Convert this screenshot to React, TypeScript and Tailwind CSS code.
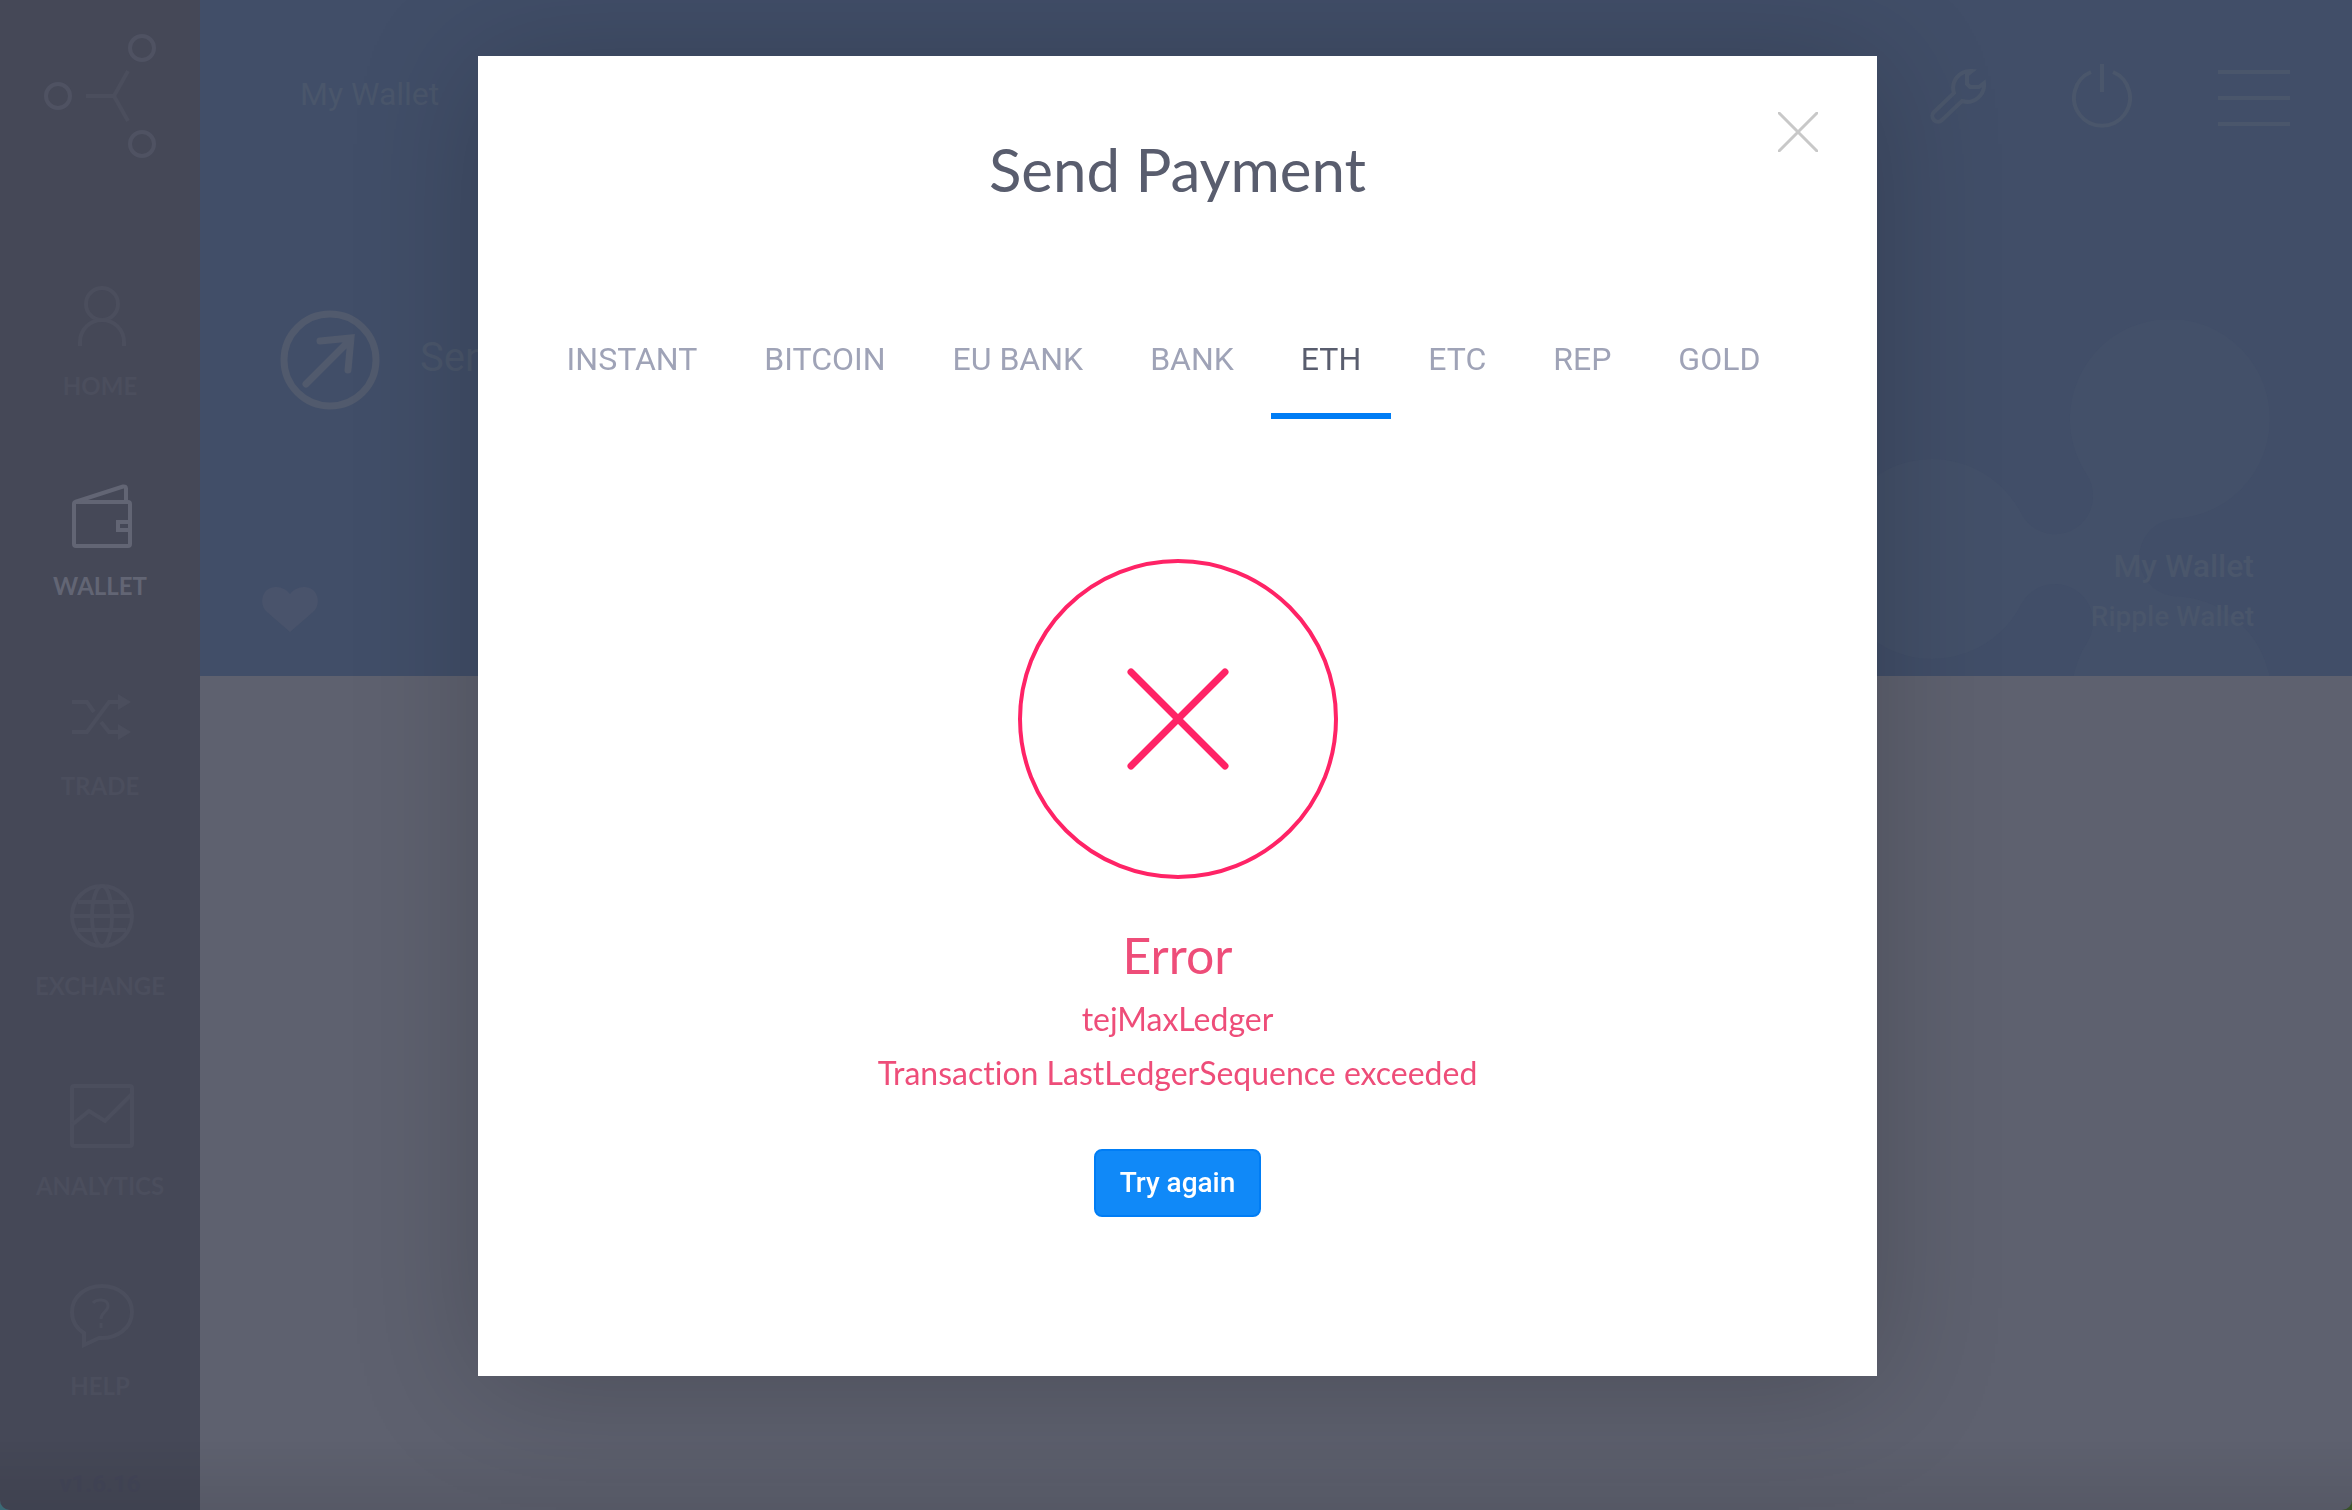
import React, { useState } from 'react';

const navItems = [
  { id: 'home', label: 'HOME' },
  { id: 'wallet', label: 'WALLET' },
  { id: 'trade', label: 'TRADE' },
  { id: 'exchange', label: 'EXCHANGE' },
  { id: 'analytics', label: 'ANALYTICS' },
  { id: 'help', label: 'HELP' },
];

const tabs = ['INSTANT', 'BITCOIN', 'EU BANK', 'BANK', 'ETH', 'ETC', 'REP', 'GOLD'];

function Logo() {
  return (
    <svg width="112" height="124" viewBox="0 0 112 124" fill="none" stroke="currentColor" strokeWidth="4">
      <circle cx="98" cy="14" r="12" />
      <circle cx="14" cy="62" r="12" />
      <circle cx="98" cy="110" r="12" />
      <path d="M42 62h28M84 37L70 62l14 25" className="text-[#4b4e5d]" stroke="currentColor" />
    </svg>
  );
}

function NavIcon({ id }: { id: string }) {
  return (
    <svg className="ml-1" width="64" height="64" viewBox="0 0 64 64" fill="none" stroke="currentColor" strokeWidth="4">
      {id === 'home' && (
        <>
          <circle cx="32" cy="20" r="16" />
          <path d="M10 62v-4a22 22 0 0 1 44 0v4" />
        </>
      )}
      {id === 'wallet' && (
        <>
          <rect x="4" y="18" width="56" height="44" rx="2" />
          <path d="M5 18L53 2.500q3-.5 3 2V18M62 38H48v8h14" />
        </>
      )}
      {id === 'trade' && (
        <>
          <path d="M2 18h15l7 10M2 48h15l22-30h12M31 38l8 10h12" />
          <path d="M48 10l13 8-13 8zM48 40l13 8-13 8z" fill="currentColor" stroke="none" />
        </>
      )}
      {id === 'exchange' && (
        <>
          <circle cx="32" cy="32" r="30" />
          <ellipse cx="32" cy="32" rx="10" ry="30" />
          <path d="M8 18h48M2 32h60M8 46h48" />
        </>
      )}
      {id === 'analytics' && (
        <>
          <rect x="2" y="2" width="60" height="60" rx="2" />
          <path d="M3 40l16-13 16 10 27-27" />
        </>
      )}
      {id === 'help' && (
        <>
          <path d="M32 2C15 2 2 13 2 28c0 9 4 16 12 21v12l15-7c18 1 33-10 33-26C62 13 49 2 32 2z" />
          <path d="M23 19c3-4 15-5 15 3 0 6-7 6-7 13M31 39v5" strokeWidth="3" />
        </>
      )}
    </svg>
  );
}

function Sidebar() {
  return (
    <aside className="flex w-[200px] shrink-0 flex-col items-center bg-[#454857] text-[#4b4e5d]">
      <a href="#" aria-label="Dashboard" className="mt-[34px] text-[#4f5262]">
        <Logo />
      </a>
      <nav className="mt-[126px] flex flex-col gap-20">
        {navItems.map((item) => (
          <a
            key={item.id}
            href={`#${item.id}`}
            className={`flex flex-col items-center ${item.id === 'wallet' ? 'text-[#626574]' : ''}`}
          >
            <NavIcon id={item.id} />
            <span className="mt-5 text-[24px] leading-9 font-bold">{item.label}</span>
          </a>
        ))}
      </nav>
      <p className="mt-[62px] font-[Roboto] text-[24px] leading-9 font-bold text-[#434658]">v1.6.16</p>
    </aside>
  );
}

function Header() {
  return (
    <header className="relative flex h-[676px] flex-col overflow-hidden bg-[#414e68] font-[Roboto] text-[#4a566b]">
      {/* ripple watermark */}
      <svg className="absolute right-[80px] bottom-0 text-[#435069]" width="438" height="356" viewBox="0 0 438 356" fill="currentColor">
        <path d="M188 195A38 38 0 0 0 259 175A38 38 0 0 0 253 155A100 100 0 1 1 338 199A39 39 0 0 0 338 276A100 100 0 1 1 254 321A38 38 0 0 0 188 283A100 100 0 1 1 188 195Z" />
      </svg>

      <div className="relative flex h-[192px] items-center pr-[62px] pl-[100px]">
        <h1 className="pb-1 text-[32px]">My Wallet</h1>
        <div className="ml-auto flex items-center gap-[86px]">
          <button type="button" aria-label="Settings">
            <svg width="56" height="56" viewBox="0 0 56 56" fill="none" stroke="currentColor" strokeWidth="4">
              <path d="M42 3A17 17 0 0 0 24 25L4 44a5 5 0 0 0 8 8L32 33A17 17 0 0 0 54 15L49 19H40L37 16V7Z" />
            </svg>
          </button>
          <button type="button" aria-label="Log out">
            <svg width="60" height="64" viewBox="0 0 60 64" fill="none" stroke="currentColor" strokeWidth="4">
              <path d="M19 8a28 28 0 1 0 22 0M30 0v28" />
            </svg>
          </button>
          <button type="button" aria-label="Menu">
            <svg width="72" height="60" viewBox="0 0 72 60" fill="none" stroke="currentColor" strokeWidth="4">
              <path d="M0 6h72M0 32h72M0 58h72" />
            </svg>
          </button>
        </div>
      </div>

      <button type="button" className="relative mt-[118px] ml-20 flex items-center gap-10 self-start">
        <svg className="text-[#515a6d]" width="100" height="100" viewBox="0 0 100 100" fill="none" stroke="currentColor" strokeWidth="7">
          <circle cx="50" cy="50" r="46" />
          <path d="M26 74L70 30M40 31L71 28L68 60" strokeLinecap="round" />
        </svg>
        <span className="pb-1 text-[40px]">Send</span>
      </button>

      <div className="relative flex flex-1 items-end justify-between pr-[98px] pb-[34px] pl-[62px]">
        <svg className="mb-[10px] text-[#49536b]" width="56" height="45" viewBox="0 0 56 45" fill="currentColor">
          <path d="M28 7C21-2 8-2 3 5c-5 7-3 16 2 20l23 20 23-20c5-4 7-13 2-20-5-7-18-7-25 2z" />
        </svg>
        <div className="text-right font-medium">
          <p className="text-[32px] leading-[52px]">My Wallet</p>
          <p className="text-[28px] leading-[50px]">Ripple Wallet</p>
        </div>
      </div>
    </header>
  );
}

function PaymentModal() {
  const [activeTab, setActiveTab] = useState('ETH');

  return (
    <div className="fixed inset-0 flex items-start justify-center overflow-hidden pt-14 pl-[3px] font-[Lato] [font-variant-ligatures:none]">
      <div
        role="dialog"
        aria-labelledby="modal-title"
        className="relative flex min-h-[1320px] w-full max-w-[1399px] flex-col items-center bg-white shadow-[0_10px_120px_rgba(0,0,0,0.2)]"
      >
        <button type="button" aria-label="Close" className="absolute top-14 right-[59px] text-[#c8c8c8]">
          <svg width="40" height="40" viewBox="0 0 40 40" fill="none" stroke="currentColor" strokeWidth="3">
            <path d="M0 0l40 40M40 0L0 40" />
          </svg>
        </button>

        <h2 id="modal-title" className="mt-[77px] text-[60px] leading-[72px] text-[#595d6e]">
          Send Payment
        </h2>

        <div role="tablist" className="mt-[98px] mr-7 flex gap-[7px] font-[Roboto]">
          {tabs.map((tab) => (
            <button
              key={tab}
              type="button"
              role="tab"
              aria-selected={tab === activeTab}
              onClick={() => setActiveTab(tab)}
              className={`border-b-[6px] px-[30px] pt-8 pb-[30px] text-[32px] leading-[48px] ${
                tab === activeTab ? 'border-[#007df5] text-[#595d6e]' : 'border-transparent text-[#9fa3b7]'
              }`}
            >
              {tab}
            </button>
          ))}
        </div>

        <svg className="mt-[140px]" width="320" height="320" viewBox="0 0 320 320" fill="none" stroke="#ff2366">
          <circle cx="160" cy="160" r="158" strokeWidth="4" />
          <path d="M113 113l94 94M207 113l-94 94" strokeWidth="7" strokeLinecap="round" />
        </svg>

        <div className="mt-[46px] flex flex-col items-center text-[#ee4d79]">
          <h3 className="mb-[7px] text-[50px] leading-[60px]">Error</h3>
          <p className="text-[32px] leading-[54px]">tejMaxLedger</p>
          <p className="text-[32px] leading-[54px]">Transaction LastLedgerSequence exceeded</p>
        </div>

        <button
          type="button"
          className="mt-[49px] h-[68px] rounded-lg border-2 border-[#007df5] bg-[#1089f8] px-6 font-[Roboto] text-[28px] font-medium text-white"
        >
          Try again
        </button>
      </div>
    </div>
  );
}

export default function App() {
  return (
    <div className="bg-linear-to-r from-[#3f7480] to-[#3d5a2c]">
      <div className="flex min-h-screen overflow-hidden rounded-b-[10px] bg-[#5e616f] font-[Lato]">
        <Sidebar />
        <main className="min-w-0 flex-1">
          <Header />
        </main>
      </div>
      <PaymentModal />
      <div className="pointer-events-none fixed inset-x-0 bottom-0 h-[70px] bg-linear-to-t from-black/8 to-transparent" />
    </div>
  );
}
